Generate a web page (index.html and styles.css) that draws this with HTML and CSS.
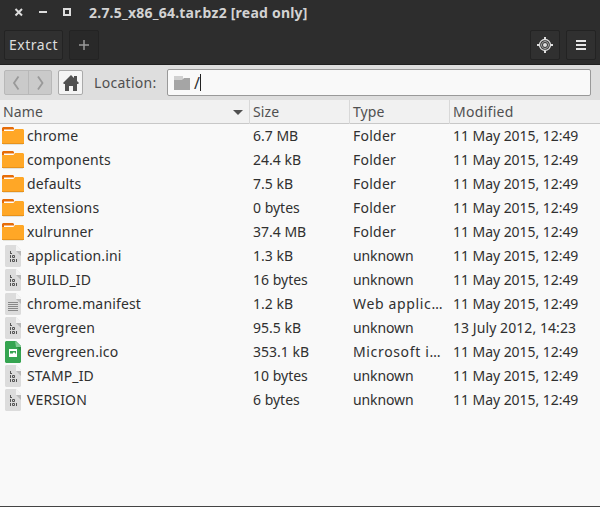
FILE: index.html
```html
<!DOCTYPE html>
<html lang="en">
<head>
<meta charset="utf-8">
<title>2.7.5_x86_64.tar.bz2 [read only]</title>
<link rel="stylesheet" href="styles.css">
</head>
<body>
<svg class="defs" aria-hidden="true">
  <symbol id="folder" viewBox="0 0 22 20">
    <path fill="#e66c08" d="M1 1h10l1 1v4H0V2z"/>
    <path fill="#ffa726" d="M0 5h11l2-2h8l1 1v14H0z"/><path fill="#fff" d="M2 3.500h10.500l-1 1.500H2z"/><path fill="#e8921b" d="M0 17h22v1H0z"/><path fill="#e3e3dc" d="M1 18h20v1H1z"/>
  </symbol>
  <symbol id="binary" viewBox="0 0 16 22">
    <path fill="#dcdcdc" d="M1 0h10l5 5v16l-1 1H1l-1-1V1z"/><path fill="#b9b9b9" d="M11 6h5v5z"/><path fill="#f4f4f4" d="M11 0l5 5v1h-5z"/>
    <path fill="none" stroke="#555" d="M5 6.500h1M5.500 6v3M5 8.500h2M5.500 10v3M7.500 10.500h2v2h-2zM5.500 14v3M7.500 14.500h2v2h-2zM11.500 14v3"/>
  </symbol>
  <symbol id="text" viewBox="0 0 16 22">
    <path fill="#dcdcdc" d="M1 0h10l5 5v16l-1 1H1l-1-1V1z"/><path fill="#b9b9b9" d="M11 6h5v5z"/><path fill="#f4f4f4" d="M11 0l5 5v1h-5z"/>
    <path stroke="#888" d="M3 9.500h10M3 11.500h10M3 13.500h10M3 15.500h10M3 17.500h10"/>
  </symbol>
  <symbol id="image" viewBox="0 0 16 22">
    <path fill="#35a450" d="M1 0h10l5 5v16l-1 1H1l-1-1V1z"/><path fill="#278c3f" d="M11 5h5v5z"/><path fill="#85cb96" d="M10 0l6 5v1h-5z"/>
    <path fill="#fff" fill-rule="evenodd" d="M4 8h8v8H4zM5 10v3l1-1 1 1 2-2 2 2v-3z"/>
  </symbol>
</svg>
<div class="window">
  <header>
    <div class="titlebar">
      <svg class="controls" width="64" height="24" viewBox="0 0 64 24"><path d="M8.500 9l6.500 6.500M15 9L8.500 15.500" stroke="#ddd" stroke-width="2"/><path d="M32 12h8" stroke="#ddd" stroke-width="2"/><path d="M57 9h6v6h-6z" fill="none" stroke="#ddd" stroke-width="2"/></svg>
      <h1>2.7.5_x86_64.tar.bz2 [read only]</h1>
    </div>
    <div class="toolbar">
      <button class="extract">Extract</button>
      <button class="add"><svg width="12" height="12"><path d="M1 6h10M6 1v10" stroke="#999" stroke-width="1.500"/></svg></button>
      <span class="spacer"></span>
      <button><svg width="16" height="16"><g fill="none" stroke="#ddd"><circle cx="8" cy="8" r="5.500" stroke-width="1.300"/><circle cx="8" cy="8" r="3.500" stroke="#aaa"/><path d="M8 0v3M8 13v3M0 8h3M13 8h3" stroke-width="2"/></g><circle cx="8" cy="8" r="2" fill="#ddd"/></svg></button>
      <button><svg width="10" height="10"><path d="M0 1h10M0 5h10M0 9h10" stroke="#e5e5e5" stroke-width="2"/></svg></button>
    </div>
  </header>
  <div class="location">
    <div class="nav"><span><svg width="8" height="14"><path d="M6.500 0.500L2 7l4.500 6.500" /></svg></span><span><svg width="8" height="14"><path d="M2 0.500L6.500 7 2 13.500"/></svg></span></div>
    <div class="home"><svg width="16" height="16"><path fill="#505050" d="M8 0l3 3V1h3v5l2 2-1 1h-1v7h-4v-5H6v5H2V9H1L0 8z"/></svg></div>
    <label for="path">Location:</label>
    <div class="entry" id="path"><svg width="16" height="14"><path fill="#d0d0d0" d="M0 0h9v4H0z"/><path fill="#a5a5a5" d="M0 4h8l2-2h6v12H0z"/></svg><span class="path">/</span><i class="caret"></i></div>
  </div>
  <div class="heads"><span>Name<svg class="sort" width="10" height="5"><path fill="#505050" d="M0 0h10L5 5z"/></svg></span><span>Size</span><span>Type</span><span>Modified</span></div>
  <div class="rows" id="rows"></div>
</div>
<script src="files.js"></script>
</body>
</html>
```
FILE: styles.css
```css
* { box-sizing: border-box; }
body { margin: 0; font: 14px/24px "Noto Sans", sans-serif; color: #303030; }
.defs { display: none; }
svg { flex: none; }
.window { display: flex; flex-direction: column; width: 600px; height: 507px; background: #f9f9f9; border-bottom: 1px solid #444; overflow: hidden; }
header { height: 65px; background: #2d2d2d; border-bottom: 1px solid #202020; }
.titlebar { display: flex; height: 24px; padding-left: 7px; }
h1 { margin: 0 0 0 18px; font-size: 14px; line-height: 25px; letter-spacing: .22px; color: #d3d3d3; white-space: nowrap; }
.toolbar { display: flex; gap: 6px; padding: 6px 4px; }
button { display: grid; place-items: center; width: 30px; height: 30px; padding: 0; border: 1px solid #232323; border-radius: 2px; background: #303030; color: #ddd; font: inherit; }
.extract { width: 59px; letter-spacing: .5px; }
.add { background: #292929; }
.spacer { flex: 1; }
.location { display: flex; align-items: center; height: 35px; padding: 4px 9px 4px 4px; background: #dedede; color: #505050; }
.nav { display: flex; width: 48px; height: 25px; border: 1px solid #b8b8b8; border-radius: 2px; background: #cacaca; }
.nav span { display: grid; place-items: center; flex: 1; }
.nav span + span { border-left: 1px solid #b8b8b8; }
.nav path { fill: none; stroke: #999; stroke-width: 1.8; }
.home { display: grid; place-items: center; width: 25px; height: 25px; margin-left: 6px; border: 1px solid #aaa; border-radius: 2px; background: #f4f4f4; }
.location label { width: 73px; margin-left: 11px; letter-spacing: .3px; }
.entry { display: flex; align-items: center; flex: 1; height: 27px; padding-left: 6px; border: 1px solid #999; border-radius: 2px; background: #f9f9f9; }
.path { margin-left: 4px; color: #303030; font-size: 16px; }
.caret { width: 1px; height: 17px; background: #222; }
.heads, .row { display: grid; grid-template-columns: 250px 100px 100px 150px; }
.heads { height: 24px; background: #f1f1f1; border-bottom: 1px solid #c8c8c8; color: #505050; letter-spacing: .1px; }
.heads span { display: flex; align-items: center; padding-left: 3px; border-right: 1px solid #d8d8d8; }
.heads span:last-child { border: 0; letter-spacing: .3px; }
.sort { margin: 0 6px 0 auto; }
.row { height: 24px; }
.row > span { padding-left: 3px; white-space: nowrap; }
.row .name { display: flex; align-items: center; padding-left: 2px; letter-spacing: .15px; }
.icon { width: 22px; height: 20px; margin-right: 3px; }
.file { width: 16px; height: 22px; margin: 0 6px 0 3px; }
.date { letter-spacing: -.05px; }
.july { letter-spacing: .07px; }
.folder-type { letter-spacing: .25px; }
.clipped-type { letter-spacing: .65px; }
.unknown-type { letter-spacing: -.1px; }
```
FILE: files.js
```js
const may = "11 May 2015, 12:49";
const files = [
  ["folder", "chrome", "6.7 MB", "Folder", may], ["folder", "components", "24.4 kB", "Folder", may],
  ["folder", "defaults", "7.5 kB", "Folder", may], ["folder", "extensions", "0 bytes", "Folder", may],
  ["folder", "xulrunner", "37.4 MB", "Folder", may], ["binary", "application.ini", "1.3 kB", "unknown", may],
  ["binary", "BUILD_ID", "16 bytes", "unknown", may], ["text", "chrome.manifest", "1.2 kB", "Web applic…", may],
  ["binary", "evergreen", "95.5 kB", "unknown", "13 July 2012, 14:23"], ["image", "evergreen.ico", "353.1 kB", "Microsoft i…", may],
  ["binary", "STAMP_ID", "10 bytes", "unknown", may], ["binary", "VERSION", "6 bytes", "unknown", may]
];
const typeClass = type => type.endsWith("…") ? "clipped-type" : type === "Folder" ? "folder-type" : "unknown-type";
document.getElementById("rows").innerHTML = files.map(([icon, name, size, type, date]) =>
  `<div class="row"><span class="name"><svg class="${icon === "folder" ? "icon" : "file"}"><use href="#${icon}"/></svg>${name}</span><span>${size}</span><span class="${typeClass(type)}">${type}</span><span class="date${date === may ? "" : " july"}">${date}</span></div>`).join("");
```
